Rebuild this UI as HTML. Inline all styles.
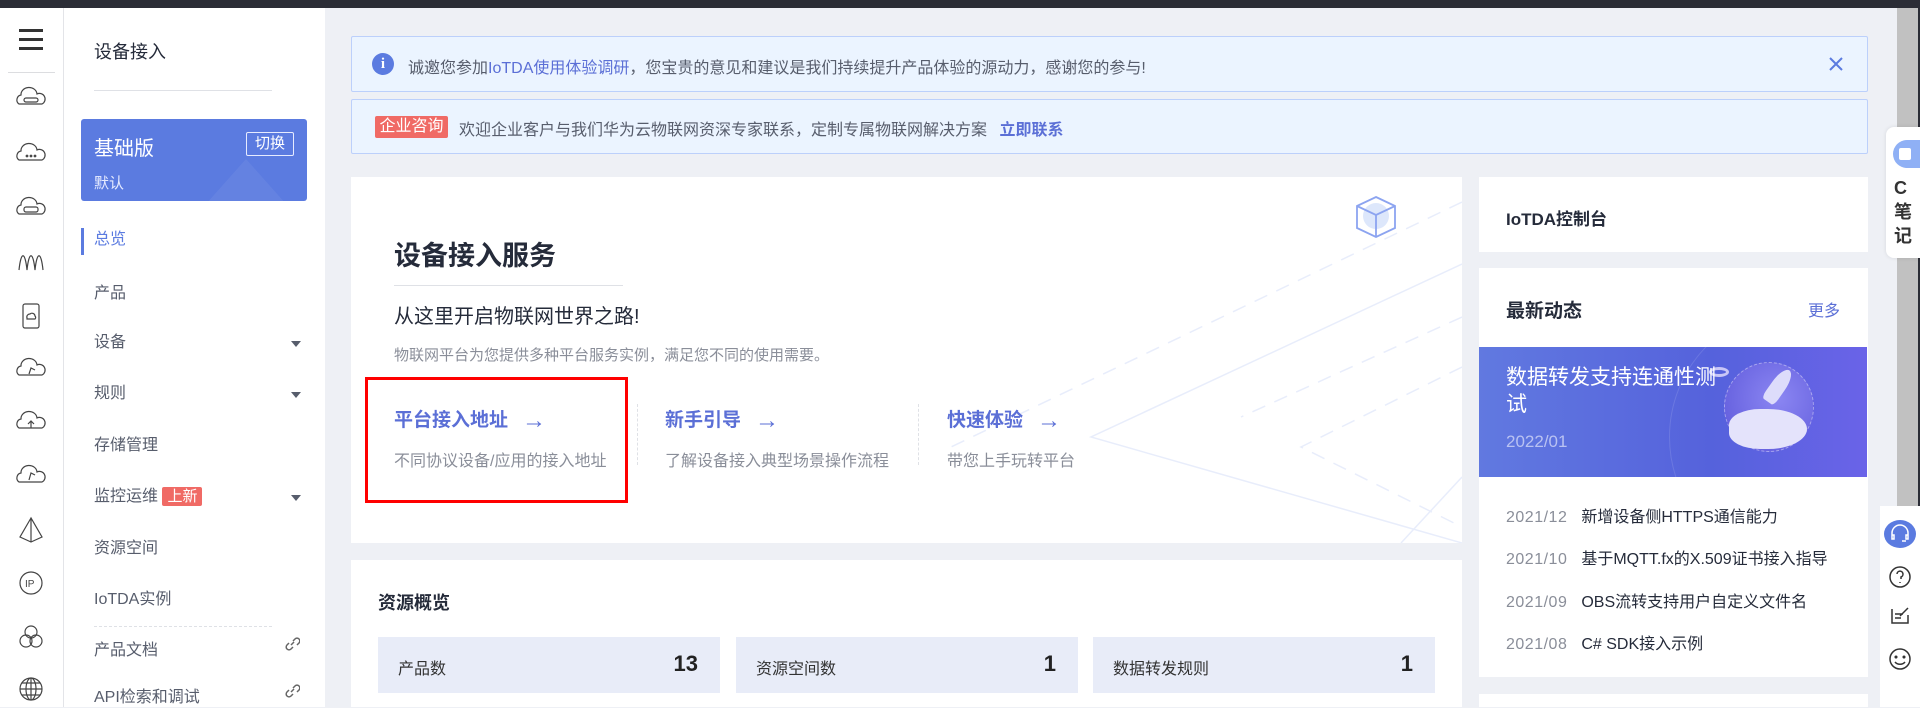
<!DOCTYPE html>
<html><head><meta charset="utf-8">
<style>
*{margin:0;padding:0;box-sizing:border-box}
body{width:1920px;height:707px;overflow:hidden;position:relative;background:#eef0f5;font-family:"Liberation Sans","Noto Sans CJK SC",sans-serif;color:#333}
.a{position:absolute}
.topbar{left:0;top:0;width:1920px;height:8px;background:#2b2d36}
.rail{left:0;top:8px;width:64px;height:699px;background:#fff;border-right:1px solid #e3e4e8}
.side{left:64px;top:8px;width:261px;height:699px;background:#fff}
.mi{position:absolute;left:94px;font-size:16px;color:#575d6c;line-height:20px}
.caret{position:absolute;left:291px;width:0;height:0;border-left:5px solid transparent;border-right:5px solid transparent;border-top:6px solid #575d6c}
.banner{left:351px;width:1517px;background:#ebf4ff;border:1px solid #bcd0fb;border-radius:2px}
.card{background:#fff}
.tile{position:absolute;top:637px;height:56px;background:#e8ecf8;font-size:16px;color:#333}
.tile span{position:absolute;left:20px;top:18px}
.tile b{position:absolute;right:22px;top:14px;font-size:22px;color:#222}
.news{position:absolute;left:1506px;font-size:16px;color:#252b3a;white-space:nowrap}
.news i{font-style:normal;color:#8a8e99;margin-right:14px;letter-spacing:.5px}
.arr{font-weight:normal;margin-left:14px;font-size:24px;vertical-align:-2px}
</style></head><body>
<div class="a topbar"></div>
<div class="a rail"></div>
<div class="a" style="left:19px;top:29px;width:24px;height:3px;background:#333"></div>
<div class="a" style="left:19px;top:38px;width:24px;height:3px;background:#333"></div>
<div class="a" style="left:19px;top:47px;width:24px;height:3px;background:#333"></div>
<div class="a" style="left:8px;top:72px;width:47px;height:1px;background:#dcdde0"></div>
<svg class="a" style="left:0;top:0" width="64" height="707" fill="none" stroke="#444" stroke-width="1.2">
<g transform="translate(31,99)"><path d="M-12 5 a5 5 0 0 1 2-9 a8 7 0 0 1 16-1 a5 5 0 0 1 5 10 z"/><rect x="-7" y="-1" width="14" height="4" rx="2"/></g>
<g transform="translate(31,154)"><path d="M-12 6 a5 5 0 0 1 2-9 a8 7 0 0 1 16-1 a5 5 0 0 1 5 10 z"/><circle cx="-4" cy="2" r=".8"/><circle cx="0" cy="2" r=".8"/><circle cx="4" cy="2" r=".8"/></g>
<g transform="translate(31,208)"><path d="M-12 6 a5 5 0 0 1 2-9 a8 7 0 0 1 16-1 a5 5 0 0 1 5 10 z"/><rect x="-7" y="-1" width="14" height="5" rx="2"/></g>
<g transform="translate(31,263)"><path d="M-12 7 C-10 -12 -6 -12 -4 7 C-2 -12 2 -12 4 7 C6 -12 10 -12 12 7"/></g>
<g transform="translate(31,316)"><rect x="-8" y="-12" width="16" height="24" rx="2"/><path d="M-4 2 a3 3 0 0 1 3-4 a3 3 0 0 1 5 2 a2 2 0 0 1 0 3 h-8z"/></g>
<g transform="translate(31,369)"><path d="M-12 6 a5 5 0 0 1 2-9 a8 7 0 0 1 16-1 a5 5 0 0 1 5 10 z"/><path d="M-2 5 l2-6 l4 2"/></g>
<g transform="translate(31,422)"><path d="M-12 6 a5 5 0 0 1 2-9 a8 7 0 0 1 16-1 a5 5 0 0 1 5 10 z"/><path d="M0 6 v-7 M-3 2 l3-3 l3 3"/></g>
<g transform="translate(31,476)"><path d="M-2 4 l2-7 l4 2"/><path d="M-12 6 a5 5 0 0 1 2-9 a8 7 0 0 1 16-1 a5 5 0 0 1 5 10 z"/></g>
<g transform="translate(31,530)"><path d="M0 -12 L-11 7 L0 12 L11 7 Z M0 -12 V12"/></g>
<g transform="translate(31,583)"><circle r="11"/><text x="-6" y="4" font-size="10" fill="#444" stroke="none" font-family="Liberation Sans">IP</text></g>
<g transform="translate(31,637)"><circle cx="0" cy="-5" r="6"/><circle cx="-5" cy="4" r="6"/><circle cx="5" cy="4" r="6"/></g>
<g transform="translate(31,689)"><circle r="11"/><path d="M-11 0 h22 M0 -11 v22 M-9 -6 h18 M-9 6 h18"/><ellipse rx="5" ry="11"/></g>
</svg>
<div class="a side"></div>
<div class="a" style="left:94px;top:38px;font-size:18px;color:#252b3a">设备接入</div>
<div class="a" style="left:94px;top:90px;width:178px;height:1px;background:#dfe1e6"></div>
<div class="a" style="left:81px;top:119px;width:226px;height:82px;background:#5b7be0;border-radius:3px;overflow:hidden">
 <div class="a" style="left:125px;top:40px;width:0;height:0;border-left:40px solid transparent;border-right:40px solid transparent;border-bottom:45px solid rgba(255,255,255,.06)"></div>
</div>
<div class="a" style="left:94px;top:132px;font-size:20px;color:#fff">基础版</div>
<div class="a" style="left:94px;top:172px;font-size:15px;color:#e6ebff">默认</div>
<div class="a" style="left:246px;top:132px;width:48px;height:24px;border:1px solid #e6ebff;border-radius:2px;color:#fff;font-size:15px;text-align:center;line-height:22px">切换</div>
<div class="a" style="left:81px;top:228px;width:3px;height:27px;background:#5b7be0"></div>
<div class="mi" style="top:230px;color:#5b7be0">总览</div>
<div class="mi" style="top:284px">产品</div>
<div class="mi" style="top:333px">设备</div><div class="caret" style="top:341px"></div>
<div class="mi" style="top:384px">规则</div><div class="caret" style="top:392px"></div>
<div class="mi" style="top:436px">存储管理</div>
<div class="mi" style="top:487px">监控运维 <span style="background:#f06a65;color:#fff;font-size:15px;padding:1px 5px;border-radius:2px">上新</span></div><div class="caret" style="top:495px"></div>
<div class="mi" style="top:539px">资源空间</div>
<div class="mi" style="top:590px">IoTDA实例</div>
<div class="a" style="left:94px;top:626px;width:178px;border-top:1px dashed #dfe1e6"></div>
<div class="mi" style="top:641px">产品文档</div>
<div class="mi" style="top:688px">API检索和调试</div>
<svg class="a" style="left:284px;top:636px" width="16" height="16" fill="none" stroke="#666" stroke-width="1.5"><path d="M7 9 l3-3 M5 7 l-2 2 a2.5 2.5 0 0 0 4 4 l2-2 M9 5 l2-2 a2.5 2.5 0 0 1 4 4 l-2 2"/></svg>
<svg class="a" style="left:284px;top:683px" width="16" height="16" fill="none" stroke="#666" stroke-width="1.5"><path d="M7 9 l3-3 M5 7 l-2 2 a2.5 2.5 0 0 0 4 4 l2-2 M9 5 l2-2 a2.5 2.5 0 0 1 4 4 l-2 2"/></svg>

<div class="a banner" style="top:36px;height:56px"></div>
<div class="a" style="left:372px;top:53px;width:22px;height:22px;border-radius:50%;background:#5b7be0;color:#fff;font:bold 15px 'Liberation Serif',serif;text-align:center;line-height:22px">i</div>
<div class="a" style="left:408px;top:54px;font-size:16px;color:#575d6c;white-space:nowrap">诚邀您参加<span style="color:#5b6fd6">IoTDA使用体验调研</span>，您宝贵的意见和建议是我们持续提升产品体验的源动力，感谢您的参与!</div>
<svg class="a" style="left:1828px;top:56px" width="16" height="16" stroke="#5b7be0" stroke-width="2"><path d="M2 2 L14 14 M14 2 L2 14"/></svg>
<div class="a banner" style="top:99px;height:55px"></div>
<div class="a" style="left:375px;top:116px;width:73px;height:22px;background:#f06a65;color:#fff;font-size:16px;text-align:center;line-height:22px;border-radius:2px">企业咨询</div>
<div class="a" style="left:459px;top:116px;font-size:16px;color:#575d6c;white-space:nowrap">欢迎企业客户与我们华为云物联网资深专家联系，定制专属物联网解决方案 <b style="color:#5b6fd6;margin-left:8px">立即联系</b></div>

<div class="a card" style="left:351px;top:177px;width:1111px;height:366px;overflow:hidden">
<svg class="a" style="left:0;top:0" width="1111" height="366" fill="none" stroke="#e8edfb" stroke-width="1.5">
<path d="M1111 25 L600 270" stroke-dasharray="14 10"/>
<path d="M1111 87 L740 260 L1111 366"/>
<path d="M1111 140 L890 240" stroke-dasharray="14 10"/>
<path d="M1111 190 L950 270 L1111 350" stroke-dasharray="14 10"/>
<path d="M1111 300 L1050 366"/>
</svg>
<svg class="a" style="left:1002px;top:17px" width="46" height="46"><circle cx="23" cy="22" r="13" fill="#dde7fb"/><path d="M23 3 L42 12 L42 34 L23 43 L4 34 L4 12 Z M4 12 L23 21 L42 12 M23 21 V43" fill="none" stroke="#8ca4f0" stroke-width="1.8"/></svg>
</div>
<div class="a" style="left:394px;top:234px;font-size:27px;font-weight:bold;color:#252b3a">设备接入服务</div>
<div class="a" style="left:394px;top:285px;width:229px;height:1px;background:#dfe1e6"></div>
<div class="a" style="left:394px;top:300px;font-size:20px;color:#252b3a">从这里开启物联网世界之路!</div>
<div class="a" style="left:394px;top:344px;font-size:15px;color:#8a8e99">物联网平台为您提供多种平台服务实例，满足您不同的使用需要。</div>
<div class="a" style="left:394px;top:405px;font-size:19px;font-weight:bold;color:#5b6fd6">平台接入地址<span class="arr">→</span></div>
<div class="a" style="left:394px;top:447px;font-size:16px;color:#8a8e99">不同协议设备/应用的接入地址</div>
<div class="a" style="left:637px;top:404px;height:61px;border-left:1px dashed #dfe1e6"></div>
<div class="a" style="left:665px;top:405px;font-size:19px;font-weight:bold;color:#5b6fd6">新手引导<span class="arr">→</span></div>
<div class="a" style="left:665px;top:447px;font-size:16px;color:#8a8e99">了解设备接入典型场景操作流程</div>
<div class="a" style="left:918px;top:404px;height:61px;border-left:1px dashed #dfe1e6"></div>
<div class="a" style="left:947px;top:405px;font-size:19px;font-weight:bold;color:#5b6fd6">快速体验<span class="arr">→</span></div>
<div class="a" style="left:947px;top:447px;font-size:16px;color:#8a8e99">带您上手玩转平台</div>
<div class="a" style="left:365px;top:377px;width:263px;height:126px;border:3px solid #f00"></div>

<div class="a card" style="left:351px;top:560px;width:1111px;height:147px"></div>
<div class="a" style="left:378px;top:589px;font-size:18px;font-weight:bold;color:#252b3a">资源概览</div>
<div class="tile" style="left:378px;width:342px"><span>产品数</span><b>13</b></div>
<div class="tile" style="left:736px;width:342px"><span>资源空间数</span><b>1</b></div>
<div class="tile" style="left:1093px;width:342px"><span>数据转发规则</span><b>1</b></div>

<div class="a card" style="left:1479px;top:177px;width:389px;height:75px"></div>
<div class="a" style="left:1506px;top:205px;font-size:17px;font-weight:bold;color:#252b3a">IoTDA控制台</div>
<div class="a card" style="left:1479px;top:268px;width:389px;height:409px"></div>
<div class="a" style="left:1506px;top:296px;font-size:19px;font-weight:bold;color:#252b3a">最新动态</div>
<div class="a" style="left:1808px;top:297px;font-size:16px;color:#5b6fd6">更多</div>
<div class="a" style="left:1479px;top:347px;width:388px;height:130px;background:linear-gradient(90deg,#6179e0,#5562dc 60%,#6a63e8);overflow:hidden">
 <div class="a" style="left:190px;top:-40px;width:260px;height:260px;border-radius:50%;border:1px solid rgba(255,255,255,.12)"></div>
 <div class="a" style="left:245px;top:15px;width:90px;height:90px;border-radius:50%;background:radial-gradient(circle at 60% 40%,#8b86f2,#5b56d9);border:1px dashed rgba(255,255,255,.4)"></div>
 <div class="a" style="left:250px;top:62px;width:78px;height:40px;border-radius:40% 50% 50% 40%;background:#e4e3fb"></div>
 <div class="a" style="left:292px;top:20px;width:15px;height:38px;border-radius:50% 50% 20% 20%;background:#dddcfb;transform:rotate(35deg)"></div>
 <div class="a" style="left:230px;top:20px;width:20px;height:10px;border-radius:50%;border:3px solid #c9c6f7"></div>
</div>
<div class="a" style="left:1506px;top:364px;font-size:21px;line-height:27px;color:#fff">数据转发支持连通性测<br>试</div>
<div class="a" style="left:1506px;top:432px;font-size:17px;color:#b9c2f2">2022/01</div>
<div class="news" style="top:503px"><i>2021/12</i>新增设备侧HTTPS通信能力</div>
<div class="news" style="top:545px"><i>2021/10</i>基于MQTT.fx的X.509证书接入指导</div>
<div class="news" style="top:588px"><i>2021/09</i>OBS流转支持用户自定义文件名</div>
<div class="news" style="top:630px"><i>2021/08</i>C# SDK接入示例</div>
<div class="a card" style="left:1479px;top:694px;width:389px;height:13px"></div>

<div class="a" style="left:1897px;top:8px;width:21px;height:699px;background:#c1c1c1"></div>
<div class="a" style="left:1918px;top:8px;width:2px;height:699px;background:#2b2d36"></div>
<div class="a" style="left:1886px;top:127px;width:34px;height:131px;background:#fff;border-radius:8px 0 0 8px;box-shadow:0 0 4px rgba(0,0,0,.1)"></div>
<div class="a" style="left:1893px;top:140px;width:27px;height:28px;border-radius:14px 0 0 14px;background:#8fb0f5"></div>
<div class="a" style="left:1899px;top:148px;width:12px;height:12px;background:#fff;border-radius:2px"></div>
<div class="a" style="left:1894px;top:176px;font-size:18px;font-weight:bold;color:#333;line-height:24px;width:24px">C<br>笔<br>记</div>
<div class="a" style="left:1880px;top:506px;width:40px;height:201px;background:#fff"></div>
<svg class="a" style="left:1880px;top:506px" width="40" height="201" fill="none" stroke="#333" stroke-width="1.5">
<ellipse cx="20" cy="28" rx="16" ry="14" fill="#5b7be0" stroke="none"/>
<path d="M12 31 v-4 a8 8 0 0 1 16 0 v4 M12 29 h2 v4 h-2z M26 29 h2 v4 h-2z M22 35 h4" stroke="#fff"/>
<circle cx="20" cy="71" r="10"/><path d="M17 68 a3 3 0 1 1 4 3 v2 M20 76 v1"/>
<path d="M12 103 v14 h16 v-8 M15 108 h8 M15 112 h6 M20 110 l8-8"/>
<circle cx="20" cy="153" r="10"/><circle cx="16" cy="151" r=".8"/><circle cx="24" cy="151" r=".8"/><path d="M15 156 a6 5 0 0 0 10 0"/>
</svg>
</body></html>
